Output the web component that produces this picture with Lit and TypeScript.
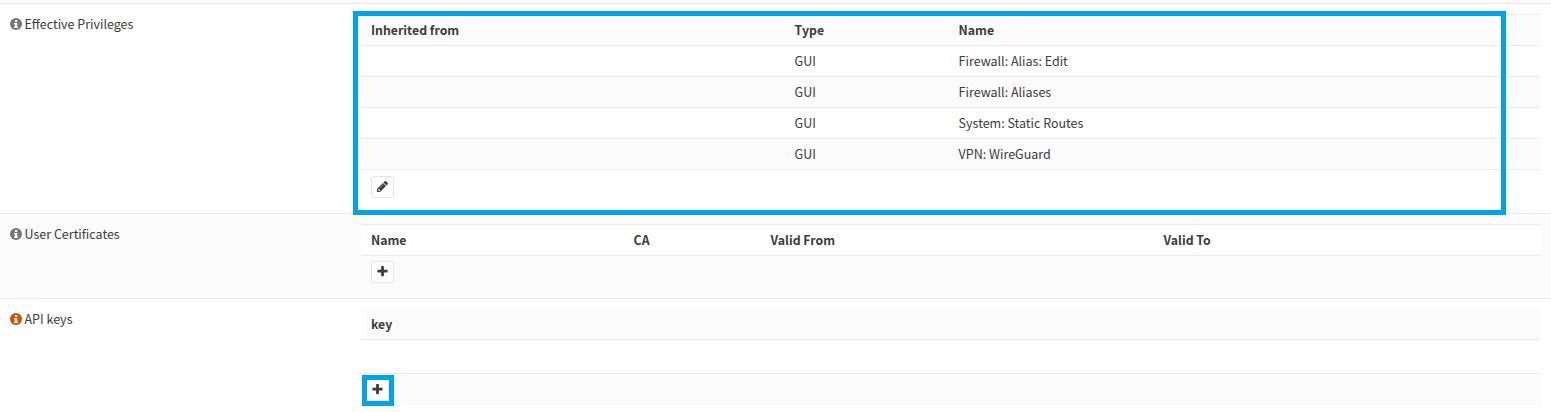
import { LitElement, html, css, svg } from "lit";
import { customElement } from "lit/decorators.js";
import { classMap } from "lit/directives/class-map.js";

const info = svg`<circle cx="6" cy="6" r="6"/><path class="glyph" d="M5 2h2.2v2H5zM4 5h3.2v3.6H8V10H4V8.6h.9V6.3H4z"/>`;
const pencil = svg`<path d="M491 1536l91-91-235-235-91 91v107h128v128h107zm523-928q0-22-22-22-10 0-17 7l-542 542q-7 7-7 17 0 22 22 22 10 0 17-7l542-542q7-7 7-17zm-54-192l416 416-832 832h-416v-416zm683 96q0 53-37 90l-166 166-416-416 166-165q36-38 90-38 53 0 91 38l235 234q37 39 37 91z"/>`;
const plus = svg`<path d="M1600 736v192q0 40-28 68t-68 28h-416v416q0 40-28 68t-68 28h-192q-40 0-68-28t-28-68v-416h-416q-40 0-68-28t-28-68v-192q0-40 28-68t68-28h416v-416q0-40 28-68t68-28h192q40 0 68 28t28 68v416h416q40 0 68 28t28 68z"/>`;

const privileges = [
  "Firewall: Alias: Edit",
  "Firewall: Aliases",
  "System: Static Routes",
  "VPN: WireGuard",
];

@customElement("app-root")
export class AppRoot extends LitElement {
  static styles = css`
    :host {
      display: block;
      position: relative;
      height: 412px;
      overflow: hidden;
      background: #fff;
      color: #3c3c3b;
      font: 12.5px/20px "Source Sans Pro", "Noto Sans CJK SC", sans-serif;
    }
    * { box-sizing: border-box; }
    .strip { height: 3px; background: #fbfbfb; }
    .section {
      display: grid;
      grid-template-columns: 361px 1fr;
      border-top: 1px solid #ebebeb;
      padding: 10px 10px 0 0;
    }
    .privileges { height: 210px; }
    .certificates { height: 85px; background: #fbfbfb; }
    .keys { height: 114px; }
    .label {
      display: flex;
      align-items: center;
      gap: 2.5px;
      height: 20px;
      padding-left: 10px;
    }
    .label svg { width: 12px; height: 12px; fill: #777; }
    .label.active svg { fill: #d94f00; }
    .label .glyph { fill: #fff; }
    .row {
      display: grid;
      height: 31px;
      padding-left: 10px;
      border-top: 1px solid #ebebeb;
      align-items: center;
    }
    .row.three { grid-template-columns: 423.6px 164px 1fr; }
    .row.four { grid-template-columns: 262.6px 137px 393px 1fr; }
    .row.odd { background: #fbfbfb; }
    .row.plain { background: #fff; }
    .row.head { font-weight: 600; font-size: 12.3px; }
    .row.first { border-top: 0; height: 30px; }
    .row.blank { height: 34px; }
    .row.last { height: 33px; padding: 5px 0 0 5px; align-items: start; }
    .row.tools { height: 42px; padding-top: 6px; align-items: start; }
    .row.certtools { padding-top: 5px; }
    button {
      display: flex;
      align-items: flex-start;
      justify-content: center;
      width: 23px;
      height: 22px;
      padding: 3px 0 0;
      border: 1px solid #e5e5e5;
      border-radius: 3px;
      background: #fff;
    }
    button svg { width: 13px; height: 13px; fill: #3c3c3b; }
    .mark {
      position: absolute;
      border: 5px solid #00a2e8;
      pointer-events: none;
    }
    .mark.wide { left: 353px; top: 11px; width: 1153px; height: 204px; }
    .mark.small { left: 362px; top: 375px; width: 32px; height: 31px; }
  `;

  private label(text: string, active = false) {
    return html`<div class=${classMap({ label: true, active })}>
      <svg viewBox="0 0 12 12">${info}</svg><span>${text}</span>
    </div>`;
  }

  private button(icon: unknown, title: string) {
    return html`<button aria-label=${title}><svg viewBox="0 0 1792 1792">${icon}</svg></button>`;
  }

  render() {
    return html`
      <div class="strip"></div>
      <div class="section privileges">
        ${this.label("Effective Privileges")}
        <div>
          <div class="row three head odd"><span>Inherited from</span><span>Type</span><span>Name</span></div>
          ${privileges.map(
            (name, i) => html`<div class=${classMap({ row: true, three: true, odd: i % 2 === 1 })}>
              <span></span><span>GUI</span><span>${name}</span>
            </div>`
          )}
          <div class="row tools">${this.button(pencil, "Edit")}</div>
        </div>
      </div>
      <div class="section certificates">
        ${this.label("User Certificates")}
        <div>
          <div class="row four head plain"><span>Name</span><span>CA</span><span>Valid From</span><span>Valid To</span></div>
          <div class="row tools certtools">${this.button(plus, "Add")}</div>
        </div>
      </div>
      <div class="section keys">
        ${this.label("API keys", true)}
        <div>
          <div class="row head odd first"><span>key</span></div>
          <div class="row blank"></div>
          <div class="row odd last">${this.button(plus, "Add")}</div>
        </div>
      </div>
      <div class="mark wide"></div>
      <div class="mark small"></div>
    `;
  }
}
